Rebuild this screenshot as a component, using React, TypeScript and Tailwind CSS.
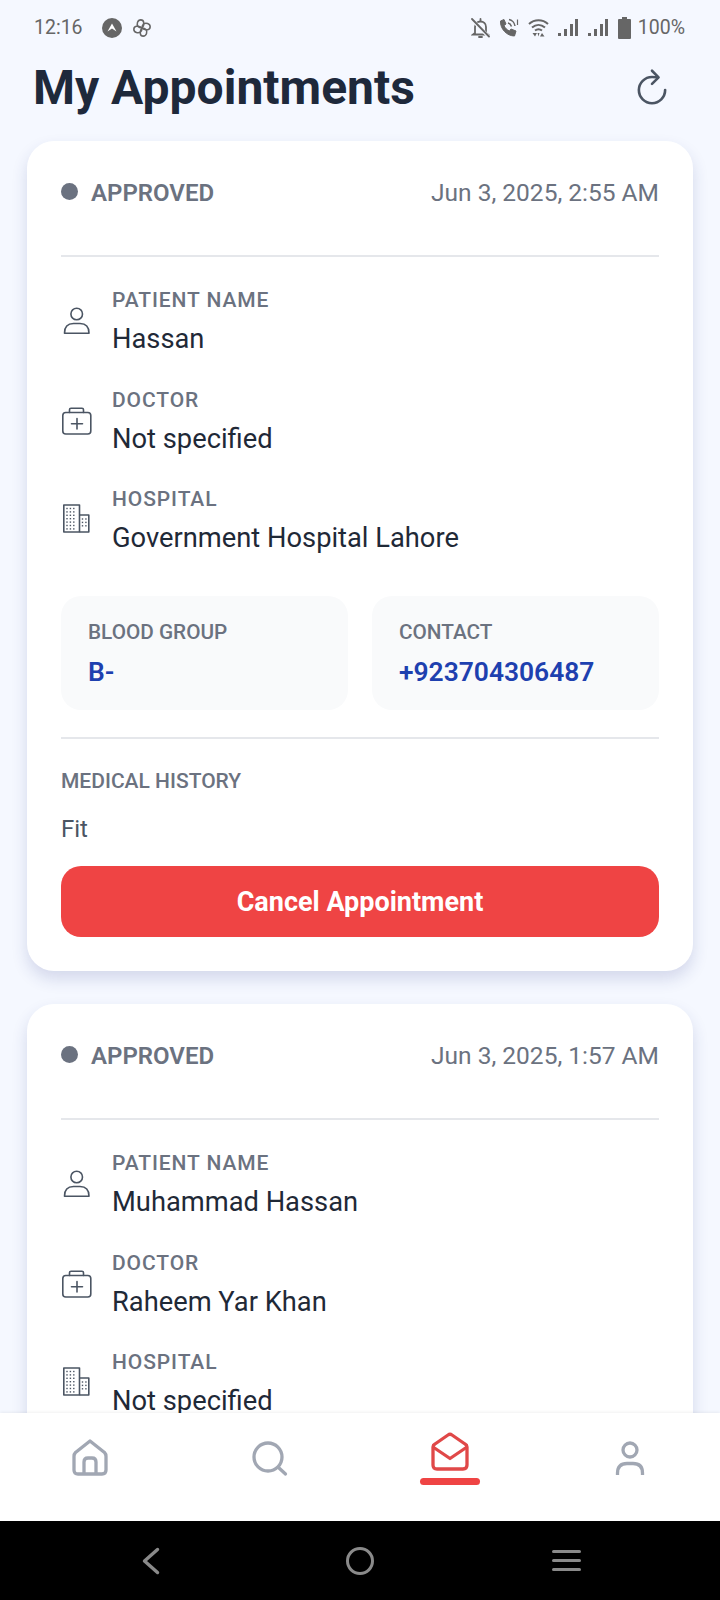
import { IoRefreshOutline } from 'react-icons/io5';

type Appointment = {
  date: string;
  patient: string;
  doctor: string;
  hospital: string;
  blood?: string;
  contact?: string;
  history?: string;
};

const appointments: Appointment[] = [
  {
    date: 'Jun 3, 2025, 2:55 AM',
    patient: 'Hassan',
    doctor: 'Not specified',
    hospital: 'Government Hospital Lahore',
    blood: 'B-',
    contact: '+923704306487',
    history: 'Fit',
  },
  {
    date: 'Jun 3, 2025, 1:57 AM',
    patient: 'Muhammad Hassan',
    doctor: 'Raheem Yar Khan',
    hospital: 'Not specified',
  },
];

function PersonIcon() {
  return (
    <svg width="32" height="32" viewBox="0 0 32 32" fill="none" stroke="#4b5563" strokeWidth="1.6">
      <circle cx="15.7" cy="9" r="5.8" />
      <path d="M3.5 28.2 Q3.5 18.5 12.5 18.5 H19 Q28 18.5 28 28.2 Z" strokeLinejoin="round" />
    </svg>
  );
}

function MedicalIcon() {
  return (
    <svg width="32" height="32" viewBox="0 0 32 32" fill="none" stroke="#4b5563" strokeWidth="1.6" strokeLinecap="round">
      <rect x="1.8" y="7.5" width="28" height="21.5" rx="3" />
      <path d="M8.5 7.5 V4.8 Q8.5 3.2 10 3.2 H21 Q22.5 3.2 22.5 4.8 V7.5" />
      <path d="M16 13.5 V24 M10.5 18.8 H21.5" />
    </svg>
  );
}

function BuildingIcon() {
  const dots: [number, number][] = [];
  for (let y = 4.5; y <= 25; y += 3.4) {
    for (let x = 6; x <= 15; x += 3.4) dots.push([x, y]);
  }
  for (let y = 15; y <= 25; y += 3.4) {
    for (let x = 21.5; x <= 25; x += 3.4) dots.push([x, y]);
  }
  return (
    <svg width="32" height="32" viewBox="0 0 32 32" fill="none" stroke="#4b5563" strokeWidth="1.6" strokeLinejoin="round">
      <path d="M2.8 28 V1 H18.5 V28 Z" />
      <path d="M18.5 11 H27.8 V28 H18.5" />
      {dots.map(([x, y]) => (
        <rect key={`${x}-${y}`} x={x - 0.7} y={y - 0.7} width="1.4" height="1.4" fill="#4b5563" stroke="none" />
      ))}
    </svg>
  );
}

function DetailRow({ icon, label, value }: { icon: React.ReactNode; label: string; value: string }) {
  return (
    <div className="flex items-center gap-[19px]">
      <div className="w-8 h-8 shrink-0">{icon}</div>
      <div className="min-w-0">
        <p className="text-[21px] leading-[30px] font-medium tracking-[0.9px] text-[#6b7280]">{label}</p>
        <p className="mt-[6px] text-[27.3px] leading-[36px] text-[#1f2937]">{value}</p>
      </div>
    </div>
  );
}

function InfoBox({ label, value }: { label: string; value?: string }) {
  return (
    <div className="flex-1 h-[114px] rounded-[20px] bg-[#f9fafb] px-[27px] pt-[20px]">
      <p className="text-[20.75px] leading-[32px] font-medium text-[#6b7280]">{label}</p>
      <p className="mt-[6px] text-[26.4px] leading-[36px] font-semibold text-[#1e40af]">{value}</p>
    </div>
  );
}

function AppointmentCard({ a }: { a: Appointment }) {
  return (
    <div className="shrink-0 rounded-[27px] bg-white px-[34px] pt-[34px] pb-[34px] shadow-[0_8px_16px_rgba(40,50,130,0.16)]">
      <div className="flex items-center justify-between h-[36px]">
        <div className="flex items-center gap-[13px]">
          <span className="w-[17px] h-[17px] rounded-full bg-[#6b7280] mb-[3px]" />
          <span className="text-[24px] font-semibold text-[#6b7280]">APPROVED</span>
        </div>
        <span className="text-[24.5px] text-[#6b7280]">{a.date}</span>
      </div>
      <div className="mt-[44px] h-[2px] bg-[#e5e7eb]" />
      <div className="mt-[28px] flex flex-col gap-[27.5px]">
        <DetailRow icon={<PersonIcon />} label="PATIENT NAME" value={a.patient} />
        <DetailRow icon={<MedicalIcon />} label="DOCTOR" value={a.doctor} />
        <DetailRow icon={<BuildingIcon />} label="HOSPITAL" value={a.hospital} />
      </div>
      {a.blood && (
        <>
          <div className="mt-[40px] flex gap-[24px]">
            <InfoBox label="BLOOD GROUP" value={a.blood} />
            <InfoBox label="CONTACT" value={a.contact} />
          </div>
          <div className="mt-[27px] h-[2px] bg-[#e5e7eb]" />
          <p className="mt-[27px] text-[21px] leading-[30px] font-medium text-[#6b7280]">MEDICAL HISTORY</p>
          <p className="mt-[17px] text-[24px] leading-[32px] text-[#4b5563]">{a.history}</p>
          <button className="mt-[21px] w-full h-[71px] pt-[2px] rounded-[20px] bg-[#ef4444] text-[27px] font-bold text-white">
            Cancel Appointment
          </button>
        </>
      )}
    </div>
  );
}

function StatusBar() {
  const c = '#666666';
  return (
    <div className="h-[56px] shrink-0 flex items-center justify-between pl-[34px] pr-[35px] text-[19.5px] text-[#666666]">
      <div className="flex items-center">
        <span>12:16</span>
        <svg className="ml-[19px]" width="20" height="20" viewBox="0 0 20 20">
          <circle cx="10" cy="10" r="10" fill={c} />
          <path d="M5.5 13.5 L10 5.5 L14.5 13.5 L10 10.5 Z" fill="#fff" />
        </svg>
        <svg className="ml-[11px]" width="18" height="18" viewBox="1 1 16 16" fill="none" stroke={c} strokeWidth="1.4">
          <path d="M9 9 C6 9 4 7 5 4 C6 1 10 1 10.5 4 C10.8 6 10 8 9 9 Z" />
          <path d="M9 9 C9 6 11 4 14 5 C17 6 17 10 14 10.5 C12 10.8 10 10 9 9 Z" />
          <path d="M9 9 C12 9 14 11 13 14 C12 17 8 17 7.5 14 C7.2 12 8 10 9 9 Z" />
          <path d="M9 9 C9 12 7 14 4 13 C1 12 1 8 4 7.5 C6 7.2 8 8 9 9 Z" />
        </svg>
      </div>
      <div className="flex items-center">
        <svg width="19" height="20" viewBox="0 0 19 20" fill="none" stroke={c} strokeWidth="1.8" strokeLinecap="round">
          <path d="M4 15 V9 C4 5.5 6.5 3.5 9.5 3.5 C12.5 3.5 15 5.5 15 9 V15 L17 16.5 H2 L4 15 Z" />
          <path d="M8 19 H11 M9.5 1 V3" />
          <path d="M1 1.5 L18 19" stroke="#f5f8ff" strokeWidth="3.5" />
          <path d="M1 1 L18 18.5" />
        </svg>
        <svg className="ml-[9px]" width="20" height="20" viewBox="0 0 20 20" fill="none" stroke={c}>
          <path d="M1.5 3 L5 1.5 L7 6 L5 7.5 C6 10 8 12 10.5 13 L12 11 L17 13 L15.5 18 C8 18 1 11 1.5 3 Z" fill={c} strokeLinejoin="round" />
          <path d="M9 5 C11 5.5 12 7 12.5 8.5 M10 1.5 C13 2 15.5 5 16 8" strokeWidth="1.5" />
          <path d="M18.5 1.5 V7" strokeWidth="1.2" />
        </svg>
        <svg className="ml-[9px]" width="21" height="20" viewBox="0 0 21 20" fill="none" stroke={c} strokeWidth="2">
          <path d="M1 6 C6.5 1 14.5 1 20 6 M4 9.5 C8 6 13 6 17 9.5 M7 12.5 C9 11 12 11 14 12.5" />
          <path d="M4.5 15 L7 18.5 L9 15 Z M12 18.5 L14 15 L16.5 18.5 Z M9.5 15 L10.5 18.5 L11.5 15 Z" fill={c} stroke="none" />
        </svg>
        <svg className="ml-[9px]" width="20" height="18" viewBox="0 0 20 18" fill={c}>
          <rect x="0" y="14" width="3" height="3" />
          <rect x="6" y="10" width="3" height="7" />
          <rect x="12" y="5" width="3" height="12" />
          <rect x="17" y="0" width="3" height="17" />
        </svg>
        <svg className="ml-[10px]" width="20" height="18" viewBox="0 0 20 18" fill={c}>
          <rect x="0" y="14" width="3" height="3" />
          <rect x="6" y="10" width="3" height="7" />
          <rect x="12" y="5" width="3" height="12" />
          <rect x="17" y="0" width="3" height="17" />
        </svg>
        <svg className="ml-[10px]" width="13" height="22" viewBox="0 0 13 22" fill={c}>
          <path d="M4 0 H9 V2 H12 Q13 2 13 3 V21 Q13 22 12 22 H1 Q0 22 0 21 V3 Q0 2 1 2 H4 Z" />
        </svg>
        <span className="ml-[7px]">100%</span>
      </div>
    </div>
  );
}

function BottomNav() {
  const gray = '#a1a7b3';
  return (
    <div className="relative z-10 h-[108px] shrink-0 bg-white pb-[18px] grid grid-cols-4 items-center justify-items-center shadow-[0_-1px_3px_rgba(0,0,0,0.06)]">
      <svg width="40" height="40" viewBox="0 0 40 40" fill="none" stroke={gray} strokeWidth="3.3" strokeLinejoin="round">
        <path d="M20 3 L34.5 14.5 Q36 16 36 18.5 V32 Q36 36 32 36 H8 Q4 36 4 32 V18.5 Q4 16 5.5 14.5 Z" />
        <path d="M14 36 V24 Q14 20 18 20 H22 Q26 20 26 24 V36" />
      </svg>
      <svg width="40" height="40" viewBox="0 0 40 40" fill="none" stroke={gray} strokeWidth="3.3" strokeLinecap="round">
        <circle cx="18" cy="19" r="14" />
        <path d="M29 30 L35.5 36" />
      </svg>
      <div className="flex flex-col items-center gap-[6px]">
        <svg width="40" height="40" viewBox="0 0 40 40" fill="none" stroke="#e04848" strokeWidth="3.3" strokeLinejoin="round">
          <path d="M3 15 Q3 13 5 12 L18 3 Q20 1.5 22 3 L35 12 Q37 13 37 15 V33 Q37 37 33 37 H7 Q3 37 3 33 Z" />
          <path d="M3 15 L20 26.5 L37 15" />
        </svg>
        <div className="w-[60px] h-[7px] rounded-full bg-[#ef4444]" />
      </div>
      <svg width="40" height="40" viewBox="0 0 40 40" fill="none" stroke={gray} strokeWidth="3.3">
        <circle cx="20" cy="12" r="7" />
        <path d="M7.5 37 V35 Q7.5 25.5 17 25.5 H23 Q32.5 25.5 32.5 35 V37" />
      </svg>
    </div>
  );
}

function SystemNav() {
  return (
    <div className="h-[79px] shrink-0 bg-black flex items-center justify-center">
      <div className="w-[207px] flex justify-center pr-[4px]">
        <svg width="18" height="28" viewBox="0 0 18 28" fill="none" stroke="#8a8a8a" strokeWidth="3.4" strokeLinecap="round" strokeLinejoin="round">
          <path d="M15.5 2.5 L2.5 14 L15.5 25.5" />
        </svg>
      </div>
      <div className="w-[207px] flex justify-center">
        <div className="w-[28px] h-[28px] rounded-full border-[3.5px] border-[#8a8a8a]" />
      </div>
      <div className="w-[207px] flex flex-col items-center gap-[5.5px] pr-[2px]">
        <div className="w-[29px] h-[3.5px] rounded-full bg-[#8a8a8a]" />
        <div className="w-[29px] h-[3.5px] rounded-full bg-[#8a8a8a]" />
        <div className="w-[29px] h-[3.5px] rounded-full bg-[#8a8a8a]" />
      </div>
    </div>
  );
}

export default function App() {
  return (
    <div className="w-[720px] h-[1600px] flex flex-col overflow-hidden bg-[#f5f8ff] font-['Roboto',sans-serif]">
      <StatusBar />
      <div className="h-[63px] shrink-0 flex items-center justify-between pl-[33px] pr-[47px]">
        <h1 className="text-[48px] font-bold text-[#1e293b]">My Appointments</h1>
        <IoRefreshOutline size={42} className="text-[#4b5563] mb-[2px]" />
      </div>
      <div className="flex-1 min-h-0 overflow-hidden flex flex-col gap-[33px] px-[27px] pt-[22px]">
        {appointments.map((a) => (
          <AppointmentCard key={a.date} a={a} />
        ))}
      </div>
      <BottomNav />
      <SystemNav />
    </div>
  );
}
